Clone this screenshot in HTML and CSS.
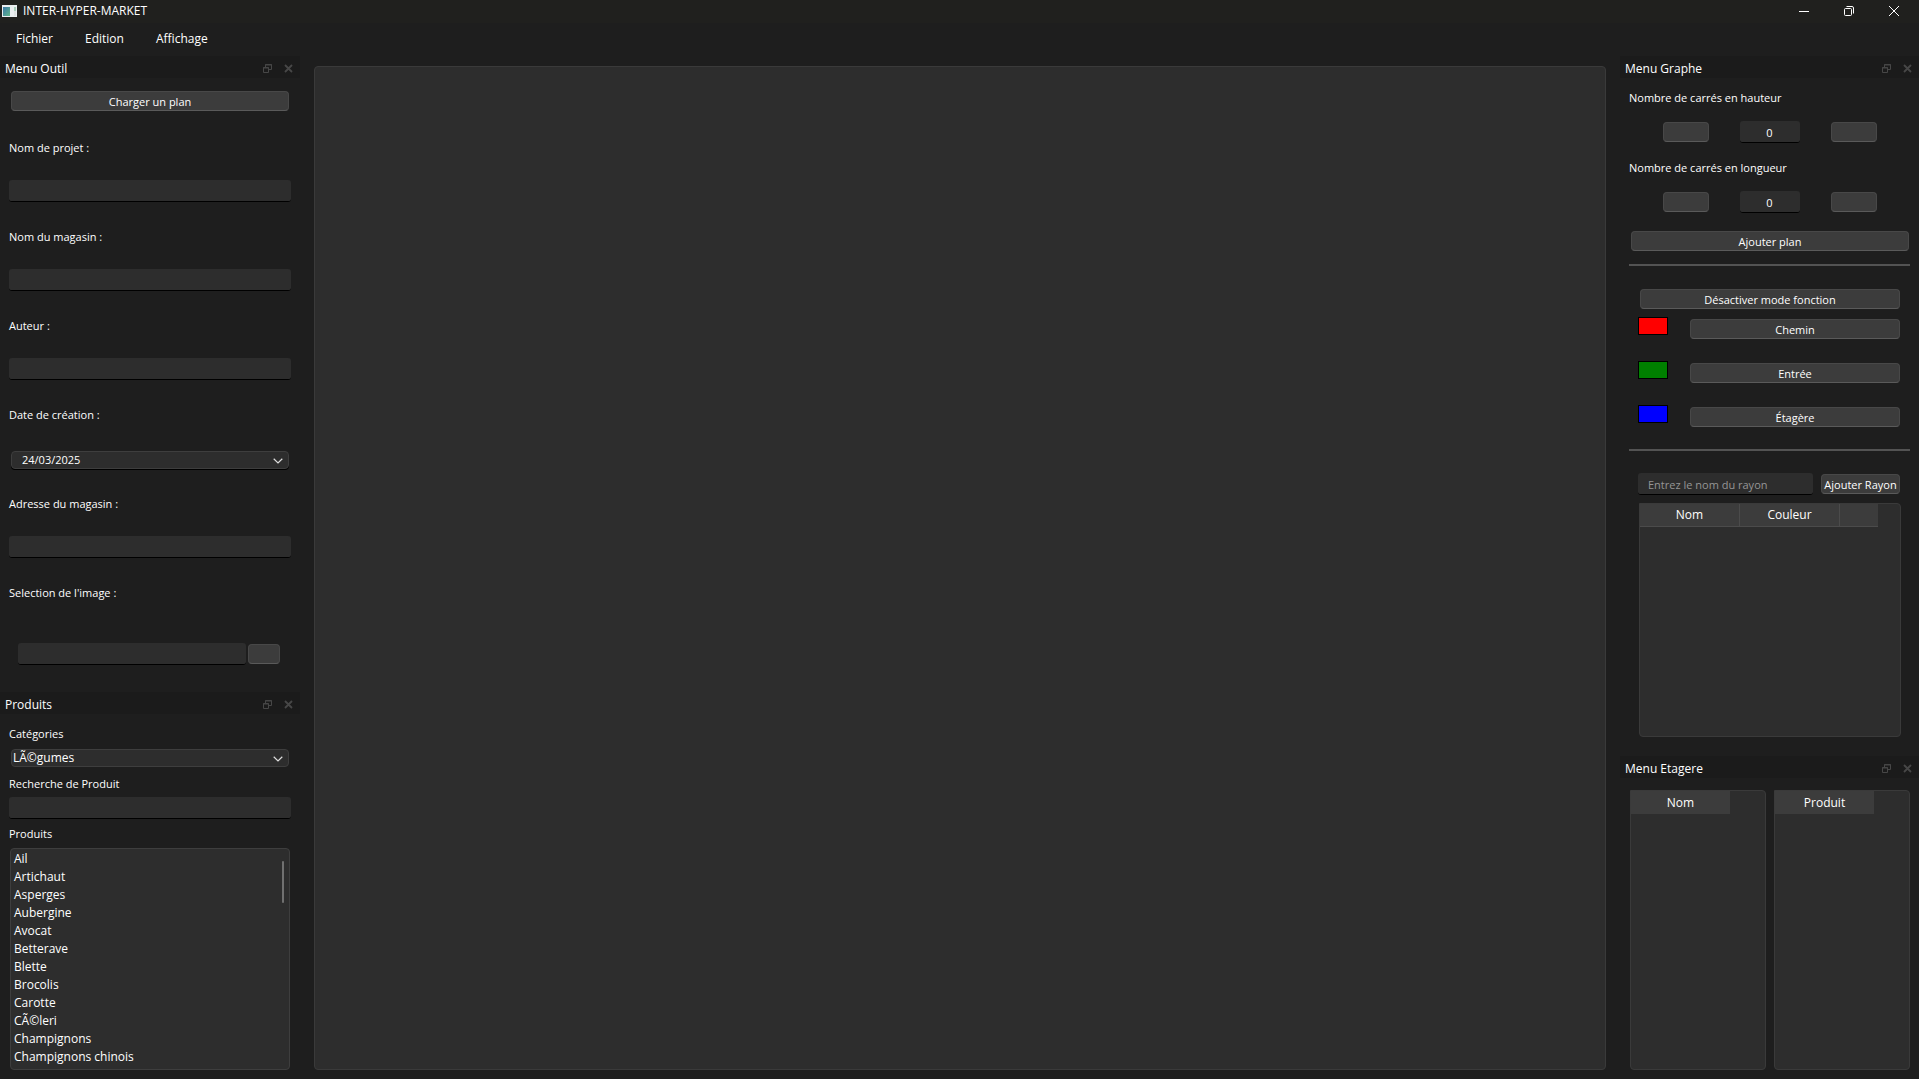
FILE: index.html
```html
<!DOCTYPE html>
<html lang="fr">
<head>
  <meta charset="UTF-8" />
  <meta name="viewport" content="width=device-width, initial-scale=1.0"/>
  <title>INTER-HYPER-MARKET</title>
  <link rel="stylesheet" href="styles.css">
</head>
<body>

  <!-- Shared icons -->
  <svg class="sprite" aria-hidden="true">
    <symbol id="float" viewBox="0 0 9 9">
      <path d="M2.5 3V.5h6v5H6M2 1h7M.5 3.5h5v5h-5zM0 4h6" fill="none" stroke="currentColor"/>
    </symbol>
    <symbol id="close" viewBox="0 0 9 9">
      <path d="M1 1l7 7M8 1l-7 7" fill="none" stroke="currentColor" stroke-width="1.8"/>
    </symbol>
    <symbol id="chevron" viewBox="0 0 10 6">
      <path d="M.7 .8L5 5 9.3 .8" fill="none" stroke="currentColor" stroke-width="1.2"/>
    </symbol>
  </svg>

  <!-- Title bar -->
  <header class="titlebar">
    <svg class="app-icon" width="15" height="12" viewBox="0 0 15 12">
      <defs>
        <linearGradient id="appGrad" x1="0" y1="0" x2="1" y2="1">
          <stop offset="0" stop-color="#3c78a8"/>
          <stop offset="1" stop-color="#5fb58a"/>
        </linearGradient>
      </defs>
      <rect width="15" height="12" fill="#e9eef0"/>
      <rect x="1" y="2" width="7" height="9" fill="url(#appGrad)"/>
      <rect x="12" y="2" width="2" height="4" fill="#a9cdbb"/>
      <rect x="12" y="6" width="2" height="5" fill="#dfe2e3"/>
    </svg>
    <span class="app-name">INTER-HYPER-MARKET</span>
    <div class="window-buttons">
      <button aria-label="Réduire">
        <svg width="10" height="10" viewBox="0 0 10 10"><path d="M0 5.5h10" stroke="#fff"/></svg>
      </button>
      <button aria-label="Restaurer">
        <svg width="10" height="10" viewBox="0 0 10 10" fill="none" stroke="#fff"><rect x=".5" y="2.5" width="7" height="7" rx="1"/><path d="M2.5 .5H8Q9.5 .5 9.5 2v5.5"/></svg>
      </button>
      <button aria-label="Fermer">
        <svg width="10" height="10" viewBox="0 0 10 10"><path d="M0 0l10 10M10 0L0 10" stroke="#fff"/></svg>
      </button>
    </div>
  </header>

  <nav class="menubar">
    <button>Fichier</button>
    <button>Edition</button>
    <button>Affichage</button>
  </nav>

  <main class="workspace">

    <div class="column">
      <!-- Menu Outil -->
      <section class="dock">
        <div class="dock-title">
          <h2>Menu Outil</h2>
          <button aria-label="Détacher"><svg><use href="#float"/></svg></button>
          <button aria-label="Fermer"><svg><use href="#close"/></svg></button>
        </div>
        <div class="tools">
          <button class="btn">Charger un plan</button>
          <div class="field">
            <label for="projet">Nom de projet :</label>
            <input class="text" id="projet" type="text">
          </div>
          <div class="field">
            <label for="magasin">Nom du magasin :</label>
            <input class="text" id="magasin" type="text">
          </div>
          <div class="field">
            <label for="auteur">Auteur :</label>
            <input class="text" id="auteur" type="text">
          </div>
          <div class="field">
            <label for="date">Date de création :</label>
            <div class="combo date">
              <select id="date"><option>24/03/2025</option></select>
              <svg><use href="#chevron"/></svg>
            </div>
          </div>
          <div class="field">
            <label for="adresse">Adresse du magasin :</label>
            <input class="text" id="adresse" type="text">
          </div>
          <div class="field">
            <label for="image">Selection de l'image :</label>
            <div class="file-row">
              <input class="text" id="image" type="text">
              <button class="btn" aria-label="Parcourir"></button>
            </div>
          </div>
        </div>
      </section>

      <!-- Produits -->
      <section class="dock grow">
        <div class="dock-title">
          <h2>Produits</h2>
          <button aria-label="Détacher"><svg><use href="#float"/></svg></button>
          <button aria-label="Fermer"><svg><use href="#close"/></svg></button>
        </div>
        <div class="products">
          <label for="categories">Catégories</label>
          <div class="combo">
            <select id="categories"><option>LÃ©gumes</option></select>
            <svg><use href="#chevron"/></svg>
          </div>
          <label for="recherche">Recherche de Produit</label>
          <input class="text" id="recherche" type="text">
          <h3>Produits</h3>
          <div class="list">
            <ul>
              <li>Ail</li>
              <li>Artichaut</li>
              <li>Asperges</li>
              <li>Aubergine</li>
              <li>Avocat</li>
              <li>Betterave</li>
              <li>Blette</li>
              <li>Brocolis</li>
              <li>Carotte</li>
              <li>CÃ©leri</li>
              <li>Champignons</li>
              <li>Champignons chinois</li>
            </ul>
            <div class="thumb"></div>
          </div>
        </div>
      </section>
    </div>

    <!-- Plan -->
    <div class="canvas"></div>

    <div class="column">
      <!-- Menu Graphe -->
      <section class="dock">
        <div class="dock-title">
          <h2>Menu Graphe</h2>
          <button aria-label="Détacher"><svg><use href="#float"/></svg></button>
          <button aria-label="Fermer"><svg><use href="#close"/></svg></button>
        </div>
        <div class="graph">
          <label for="hauteur">Nombre de carrés en hauteur</label>
          <div class="stepper">
            <button class="btn" aria-label="Moins"></button>
            <input class="text" id="hauteur" type="text" value="0">
            <button class="btn" aria-label="Plus"></button>
          </div>
          <label for="longueur">Nombre de carrés en longueur</label>
          <div class="stepper">
            <button class="btn" aria-label="Moins"></button>
            <input class="text" id="longueur" type="text" value="0">
            <button class="btn" aria-label="Plus"></button>
          </div>
          <button class="btn add-plan">Ajouter plan</button>
          <hr>
          <div class="modes">
            <button class="btn">Désactiver mode fonction</button>
            <div class="mode"><span class="swatch red"></span><button class="btn">Chemin</button></div>
            <div class="mode"><span class="swatch green"></span><button class="btn">Entrée</button></div>
            <div class="mode"><span class="swatch blue"></span><button class="btn">Étagère</button></div>
          </div>
          <hr>
          <div class="shelf-row">
            <input class="text" type="text" placeholder="Entrez le nom du rayon" aria-label="Nom du rayon">
            <button class="btn">Ajouter Rayon</button>
          </div>
          <div class="table-box shelves">
            <table class="lined">
              <thead><tr><th>Nom</th><th>Couleur</th><th class="small"></th></tr></thead>
            </table>
          </div>
        </div>
      </section>

      <!-- Menu Etagere -->
      <section class="dock grow">
        <div class="dock-title">
          <h2>Menu Etagere</h2>
          <button aria-label="Détacher"><svg><use href="#float"/></svg></button>
          <button aria-label="Fermer"><svg><use href="#close"/></svg></button>
        </div>
        <div class="shelf-tables">
          <div class="table-box">
            <table><thead><tr><th>Nom</th></tr></thead></table>
          </div>
          <div class="table-box">
            <table><thead><tr><th>Produit</th></tr></thead></table>
          </div>
        </div>
      </section>
    </div>

  </main>
</body>
</html>
```
FILE: styles.css
```css
* { box-sizing: border-box; }

body {
  margin: 0;
  min-height: 100vh;
  display: flex;
  flex-direction: column;
  background: #1e1e1e;
  color: #fff;
  font-family: "Segoe UI", "Open Sans", "Noto Sans", sans-serif;
  font-size: 12px;
  line-height: 18px;
}

button, input, select {
  font: inherit;
  color: inherit;
  margin: 0;
}

button {
  background: none;
  border: none;
  padding: 0;
}

h2, h3 {
  margin: 0;
  font-size: 12px;
  font-weight: normal;
}

label {
  display: block;
  font-size: 11px;
}

h3 { font-size: 11px; }

.sprite {
  position: absolute;
  width: 0;
  height: 0;
}

/* Title bar */
.titlebar {
  display: flex;
  align-items: center;
  height: 23px;
  padding: 0 3px 1px 2px;
  background: #20201e;
}

.app-name { margin-left: 6px; }

.window-buttons {
  display: flex;
  margin-left: auto;
}

.window-buttons button {
  width: 45px;
  height: 20px;
  display: flex;
  align-items: center;
  justify-content: center;
}

.menubar {
  display: flex;
  gap: 32px;
  height: 33px;
  padding: 0 16px;
}

.menubar button { padding-bottom: 2px; }

.workspace {
  flex: 1;
  display: grid;
  grid-template-columns: 300px minmax(0, 1fr) 299px;
  gap: 14px;
  padding-bottom: 9px;
}

.column {
  display: flex;
  flex-direction: column;
}

.canvas {
  margin-top: 10px;
  background: #2d2d2d;
  border: 1px solid #3a3a3a;
  border-radius: 4px;
}

/* Docks */
.dock.grow {
  flex: 1;
  display: flex;
  flex-direction: column;
}

.dock-title {
  display: flex;
  align-items: center;
  gap: 12px;
  height: 22px;
  padding: 2px 7px 0 5px;
  background: #1b1b1b;
}

.dock-title h2 {
  margin-right: auto;
  padding-top: 2px;
}

.dock-title button {
  width: 9px;
  height: 14px;
  color: #474747;
}

.dock-title svg {
  display: block;
  width: 9px;
  height: 9px;
}

/* Controls */
.btn {
  height: 20px;
  padding-top: 1px;
  background: #3c3c3c;
  border: 1px solid #484848;
  border-bottom-color: #5a5a5a;
  border-radius: 4px;
  font-size: 11px;
  text-align: center;
  white-space: nowrap;
}

.text {
  display: block;
  width: 100%;
  height: 22px;
  padding: 1px 10px 0;
  background: #2d2d2d;
  border: none;
  border-bottom: 1px solid #000;
  border-radius: 3px;
  font-size: 11px;
}

.text::placeholder {
  color: #959595;
  opacity: 1;
}

.combo {
  position: relative;
  margin: 0 2px;
}

.combo select {
  display: block;
  width: 100%;
  height: 18px;
  padding: 0 24px 0 1px;
  appearance: none;
  background: #2d2d2d;
  border: 1px solid #3e3e3e;
  border-radius: 4px;
  line-height: 16px;
}

.combo svg {
  position: absolute;
  right: 6px;
  bottom: 5px;
  width: 10px;
  height: 6px;
  color: #ddd;
}

.combo.date { padding-top: 4px; }

.combo.date select {
  padding-left: 10px;
  box-shadow: 0 1px 0 #000;
  font-size: 11px;
}

/* Menu Outil */
.tools {
  display: flex;
  flex-direction: column;
  padding: 13px 9px 27px;
}

.tools > .btn {
  margin: 0 2px 28px;
}

.field {
  display: flex;
  flex-direction: column;
  gap: 23px;
  padding-bottom: 26px;
}

.field:last-child { padding-bottom: 0; }

.file-row {
  display: flex;
  align-items: center;
  gap: 2px;
  padding: 18px 11px 0 9px;
}

.file-row .text { flex: 1; }

.file-row .btn { width: 32px; }

/* Produits */
.products {
  flex: 1;
  display: flex;
  flex-direction: column;
  padding: 11px 9px 0;
}

.products .combo { margin: 6px 2px 8px; }

.products .text { margin: 4px 0 6px; }

.list {
  position: relative;
  flex: 1;
  margin: 5px 1px 0;
  padding: 1px 3px;
  background: #2d2d2d;
  border: 1px solid #3e3e3e;
  border-radius: 4px;
}

.list ul {
  margin: 0;
  padding: 0;
  list-style: none;
}

.thumb {
  position: absolute;
  top: 12px;
  right: 5px;
  width: 2px;
  height: 42px;
  background: #707070;
  border-radius: 1px;
}

/* Menu Graphe */
.graph {
  display: flex;
  flex-direction: column;
  padding: 11px 9px 18px;
}

.stepper {
  display: flex;
  align-items: center;
  justify-content: center;
  gap: 31px;
  padding: 14px 0 16px;
}

.stepper .btn { width: 46px; }

.stepper .text {
  width: 60px;
  text-align: center;
}

.add-plan { margin: 2px 1px 13px 2px; }

hr {
  width: 100%;
  height: 2px;
  margin: 0;
  border: none;
  background: #535353;
}

.modes {
  display: flex;
  flex-direction: column;
  padding: 23px 10px 22px 11px;
}

.mode {
  display: flex;
  gap: 22px;
  margin: 8px 0 16px -2px;
}

.mode:last-child { margin-bottom: 0; }

.mode .btn {
  flex: 1;
  margin-top: 2px;
}

.mode + .mode { margin-top: 6px; }

.swatch {
  width: 30px;
  height: 18px;
  border: 1px solid #000;
}

.red { background: #f00; }
.green { background: #008000; }
.blue { background: #00f; }

.shelf-row {
  display: flex;
  align-items: center;
  gap: 8px;
  padding: 22px 10px 8px 9px;
}

.shelf-row .text {
  flex: 1;
  min-width: 0;
}

.shelf-row .btn { width: 79px; }

/* Tables */
.table-box {
  background: #2d2d2d;
  border: 1px solid #3a3a3a;
  border-radius: 0 4px 4px 4px;
}

.shelves {
  height: 234px;
  margin: 0 9px 1px 10px;
}

table {
  border-spacing: 0;
  table-layout: fixed;
}

th {
  width: 99px;
  height: 23px;
  padding: 0;
  background: #3c3c3c;
  font-weight: normal;
  text-align: center;
}

.lined th {
  width: 100px;
  border-right: 1px solid #4b4b4b;
  border-bottom: 1px solid #4b4b4b;
}

.lined .small {
  width: 38px;
  border-right: none;
}

.shelf-tables {
  flex: 1;
  display: flex;
  gap: 8px;
  padding: 12px 9px 0 10px;
}

.shelf-tables .table-box { flex: 1; }
```
